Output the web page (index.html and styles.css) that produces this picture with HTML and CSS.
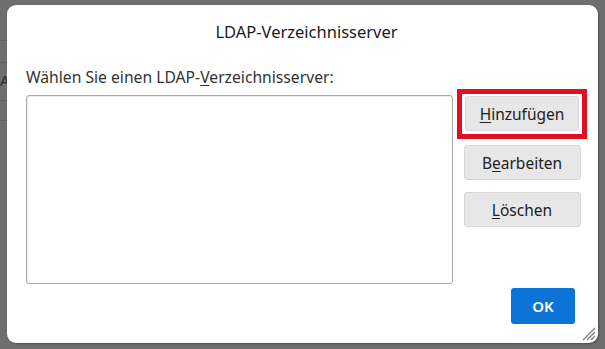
FILE: index.html
```html
<!DOCTYPE html>
<html lang="de">
<head>
<meta charset="UTF-8" />
<title>LDAP-Verzeichnisserver</title>
<link rel="stylesheet" href="styles.css">
</head>
<body>

<div class="backdrop">
  <span class="peek">A</span>
</div>

<div class="dialog" role="dialog" aria-label="LDAP-Verzeichnisserver">
  <h1 class="title">LDAP-Verzeichnisserver</h1>

  <div class="main">
    <div class="left">
      <label class="caption" for="servers">Wählen Sie einen LDAP-<u>V</u>erzeichnisserver:</label>
      <div id="servers" class="listbox" tabindex="0"></div>
    </div>

    <div class="actions">
      <div class="focus-ring">
        <button class="btn"><u>H</u>inzufügen</button>
      </div>
      <button class="btn">B<u>e</u>arbeiten</button>
      <button class="btn"><u>L</u>öschen</button>
    </div>
  </div>

  <div class="footer">
    <button class="btn-primary">OK</button>
  </div>

  <svg class="grip" width="14" height="14" viewBox="0 0 14 14">
    <path d="M13 1 L1 13 M13 5 L5 13 M13 9 L9 13" stroke="#7d7d7d" stroke-width="1.3" />
  </svg>
</div>

</body>
</html>
```

FILE: styles.css
```css
html, body {
  margin: 0;
  height: 100%;
}
body {
  background: #6e6e6e;
  font-family: "Noto Sans", "Open Sans", sans-serif;
  color: #222;
  padding: 5px 7px 6px 7px;
  box-sizing: border-box;
  position: relative;
  overflow: hidden;
}

/* bits of the window behind the dialog */
.backdrop {
  position: absolute;
  top: 0; left: 0;
  width: 7px;
  height: 100%;
  background: linear-gradient(#6e6e6e 0 40px, #5f5f5f 40px 41px, #6e6e6e 41px 62px, #5f5f5f 62px 63px, #6e6e6e 63px 100px, #5f5f5f 100px 101px, #6e6e6e 101px 120px, #5f5f5f 120px 121px, #6e6e6e 121px);
}
.peek {
  position: absolute;
  left: 0;
  top: 70px;
  font-size: 15px;
  color: #2a2a2a;
}

.dialog {
  position: relative;
  height: 100%;
  background: #fff;
  border-radius: 9px;
  box-sizing: border-box;
  padding: 16px 11px 19px 19px;
  display: flex;
  flex-direction: column;
  box-shadow: 1px 1px 2px rgba(0,0,0,0.3);
}

.title {
  margin: 0;
  font-size: 16.5px;
  font-weight: 400;
  text-align: center;
  line-height: 22px;
  color: #1a1a1a;
}

.main {
  display: flex;
  gap: 4px;
  margin-top: 24px;
  flex: 1;
}
.left {
  flex: 1;
  display: flex;
  flex-direction: column;
}
.caption {
  font-size: 15.7px;
  color: #333;
  line-height: 20px;
  margin-bottom: 8px;
}
.caption u {
  text-underline-offset: 2px;
}
.listbox {
  height: 187px;
  border: 1px solid #a9a9a9;
  border-radius: 3px;
  box-shadow: inset 1px 1px 1px rgba(0,0,0,0.08);
}

.actions {
  width: 130px;
  display: flex;
  flex-direction: column;
  align-items: center;
  gap: 12px;
  padding-top: 22px;
}
.focus-ring {
  border: 5px solid #e2101e;
  padding: 2px 3px 3px;
  margin-bottom: -6px;
  width: 130px;
  box-sizing: border-box;
  display: flex;
  justify-content: center;
}
.btn {
  font-family: inherit;
  font-size: 15.5px;
  color: #222;
  background: #e7e7e7;
  border: 1px solid #d7d7d7;
  border-radius: 3px;
  width: 117px;
  height: 35px;
  padding: 0;
}
.focus-ring .btn {
  width: 114px;
}
.btn u {
  text-underline-offset: 2px;
}

.footer {
  display: flex;
  justify-content: flex-end;
  padding-right: 12px;
}
.btn-primary {
  font-family: inherit;
  font-size: 15px;
  font-weight: 600;
  color: #fff;
  background: #0b74d6;
  border: none;
  border-radius: 3px;
  width: 64px;
  height: 36px;
}

.grip {
  position: absolute;
  right: 2px;
  bottom: 2px;
}
```
